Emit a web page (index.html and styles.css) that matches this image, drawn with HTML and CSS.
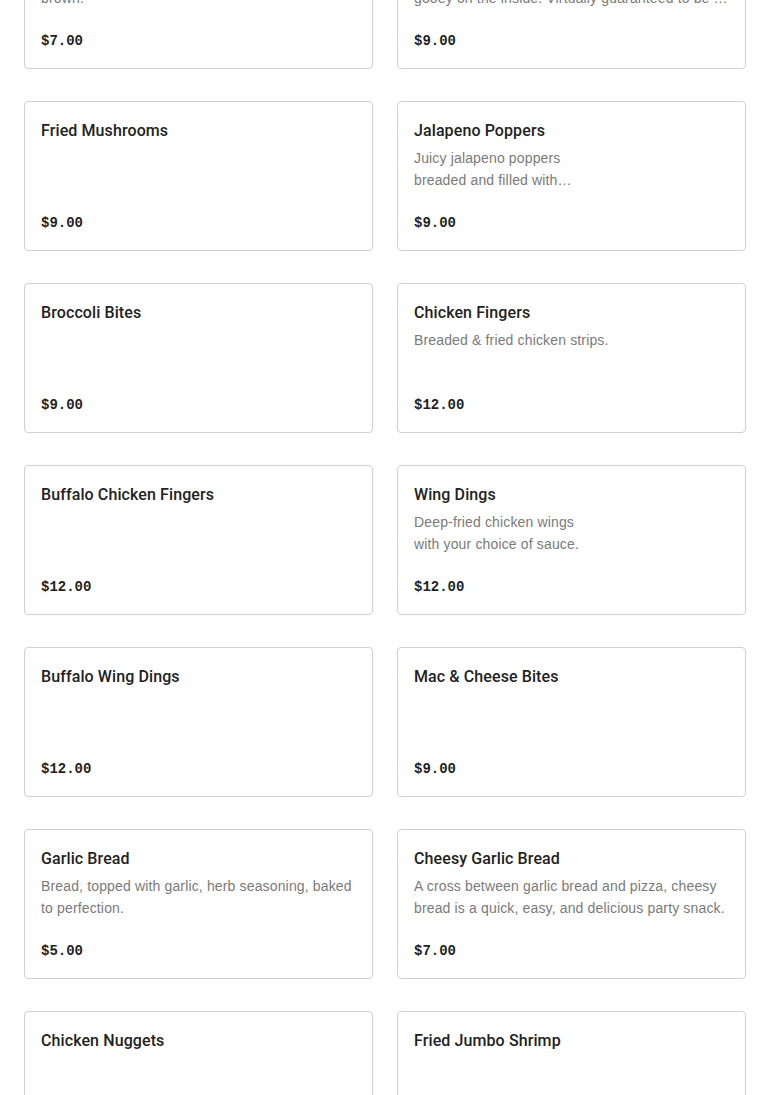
FILE: index.html
```html
<!DOCTYPE html>
<html>
	<head>
		<meta charset="utf-8" />
		<title>Appetizers</title>
		<link rel="stylesheet" href="styles.css">
	</head>
	<body>
		<div class="menu">
			<div class="item">
				<div class="name">Mozzarella Sticks</div>
				<div class="desc">Breaded mozzarella sticks fried until golden<br>brown.</div>
				<div class="price">$7.00</div>
			</div>
			<div class="item">
				<div class="name">Fried Cheese Curds</div>
				<div class="desc">Crispy and golden on the outside, warm and<br>gooey on the inside. Virtually guaranteed to be a hit at any party.</div>
				<div class="price">$9.00</div>
			</div>
			<div class="item">
				<div class="name">Fried Mushrooms</div>
				<div class="price">$9.00</div>
			</div>
			<div class="item">
				<div class="name">Jalapeno Poppers</div>
				<div class="desc">Juicy jalapeno poppers<br>breaded and filled with<br>cream cheese.</div>
				<div class="price">$9.00</div>
			</div>
			<div class="item">
				<div class="name">Broccoli Bites</div>
				<div class="price">$9.00</div>
			</div>
			<div class="item">
				<div class="name">Chicken Fingers</div>
				<div class="desc">Breaded &amp; fried chicken strips.</div>
				<div class="price">$12.00</div>
			</div>
			<div class="item">
				<div class="name">Buffalo Chicken Fingers</div>
				<div class="price">$12.00</div>
			</div>
			<div class="item">
				<div class="name">Wing Dings</div>
				<div class="desc">Deep-fried chicken wings<br>with your choice of sauce.</div>
				<div class="price">$12.00</div>
			</div>
			<div class="item">
				<div class="name">Buffalo Wing Dings</div>
				<div class="price">$12.00</div>
			</div>
			<div class="item">
				<div class="name">Mac &amp; Cheese Bites</div>
				<div class="price">$9.00</div>
			</div>
			<div class="item">
				<div class="name">Garlic Bread</div>
				<div class="desc">Bread, topped with garlic, herb seasoning, baked to perfection.</div>
				<div class="price">$5.00</div>
			</div>
			<div class="item">
				<div class="name">Cheesy Garlic Bread</div>
				<div class="desc">A cross between garlic bread and pizza, cheesy bread is a quick, easy, and delicious party snack.</div>
				<div class="price">$7.00</div>
			</div>
			<div class="item">
				<div class="name">Chicken Nuggets</div>
				<div class="price">$9.00</div>
			</div>
			<div class="item">
				<div class="name">Fried Jumbo Shrimp</div>
				<div class="price">$12.00</div>
			</div>
		</div>
	</body>
</html>
```

FILE: styles.css
```css
body {
	margin: 0;
	background: #fff;
	font-family: Roboto, "Liberation Sans", Arial, sans-serif;
	color: #222;
	overflow: hidden;
}

/* page is shown scrolled part way down the list */
.menu {
	display: grid;
	grid-template-columns: 1fr 1fr;
	column-gap: 24px;
	row-gap: 32px;
	padding: 0 24px;
	margin-top: -81px;
}

.item {
	height: 150px;
	box-sizing: border-box;
	border: 1px solid #d0d0d0;
	border-radius: 4px;
	padding: 17px 16px 15px;
	display: flex;
	flex-direction: column;
}

.name {
	font-size: 16px;
	line-height: 24px;
	font-weight: 500;
	letter-spacing: 0.1px;
	color: #222;
}

.desc {
	margin-top: 4px;
	font-family: "Liberation Sans", Arial, sans-serif;
	font-size: 14px;
	line-height: 22px;
	letter-spacing: 0.15px;
	color: #7a7a7a;
	display: -webkit-box;
	-webkit-box-orient: vertical;
	-webkit-line-clamp: 2;
	overflow: hidden;
}

.price {
	margin-top: auto;
	font-family: "Liberation Mono", "DejaVu Sans Mono", monospace;
	font-weight: bold;
	font-size: 14px;
	line-height: 24px;
	color: #1f1f1f;
}
```
